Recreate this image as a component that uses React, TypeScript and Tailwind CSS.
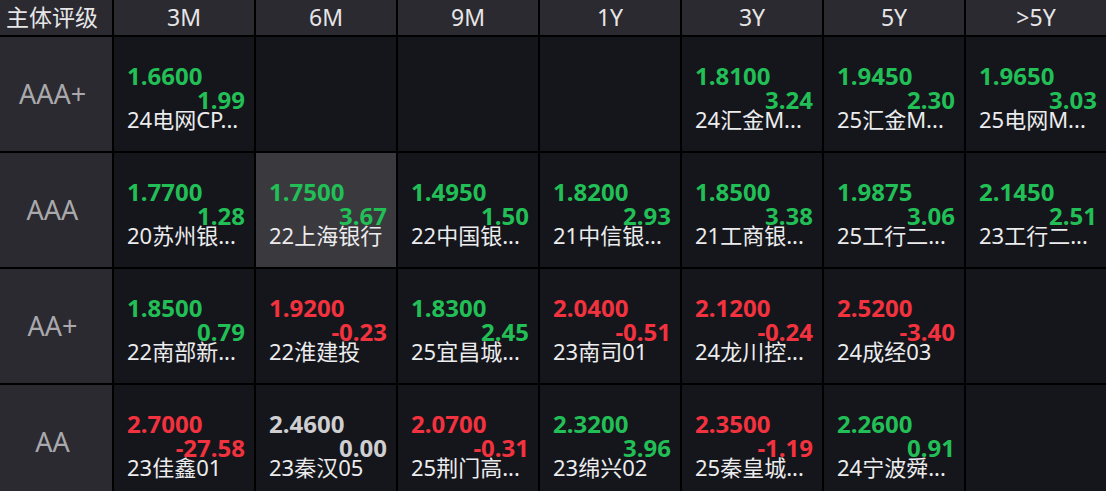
import React from 'react';

type Tone = 'up' | 'down' | 'flat';

interface Quote {
  price: string;
  change: string;
  name: string;
  tone: Tone;
  active?: boolean;
}

interface RatingRow {
  rating: string;
  cells: (Quote | null)[];
}

const TERMS = ['3M', '6M', '9M', '1Y', '3Y', '5Y', '>5Y'];

const ROWS: RatingRow[] = [
  {
    rating: 'AAA+',
    cells: [
      { price: '1.6600', change: '1.99', name: '24电网CP...', tone: 'up' },
      null,
      null,
      null,
      { price: '1.8100', change: '3.24', name: '24汇金M...', tone: 'up' },
      { price: '1.9450', change: '2.30', name: '25汇金M...', tone: 'up' },
      { price: '1.9650', change: '3.03', name: '25电网M...', tone: 'up' },
    ],
  },
  {
    rating: 'AAA',
    cells: [
      { price: '1.7700', change: '1.28', name: '20苏州银...', tone: 'up' },
      { price: '1.7500', change: '3.67', name: '22上海银行', tone: 'up', active: true },
      { price: '1.4950', change: '1.50', name: '22中国银...', tone: 'up' },
      { price: '1.8200', change: '2.93', name: '21中信银...', tone: 'up' },
      { price: '1.8500', change: '3.38', name: '21工商银...', tone: 'up' },
      { price: '1.9875', change: '3.06', name: '25工行二...', tone: 'up' },
      { price: '2.1450', change: '2.51', name: '23工行二...', tone: 'up' },
    ],
  },
  {
    rating: 'AA+',
    cells: [
      { price: '1.8500', change: '0.79', name: '22南部新...', tone: 'up' },
      { price: '1.9200', change: '-0.23', name: '22淮建投', tone: 'down' },
      { price: '1.8300', change: '2.45', name: '25宜昌城...', tone: 'up' },
      { price: '2.0400', change: '-0.51', name: '23南司01', tone: 'down' },
      { price: '2.1200', change: '-0.24', name: '24龙川控...', tone: 'down' },
      { price: '2.5200', change: '-3.40', name: '24成经03', tone: 'down' },
      null,
    ],
  },
  {
    rating: 'AA',
    cells: [
      { price: '2.7000', change: '-27.58', name: '23佳鑫01', tone: 'down' },
      { price: '2.4600', change: '0.00', name: '23秦汉05', tone: 'flat' },
      { price: '2.0700', change: '-0.31', name: '25荆门高...', tone: 'down' },
      { price: '2.3200', change: '3.96', name: '23绵兴02', tone: 'up' },
      { price: '2.3500', change: '-1.19', name: '25秦皇城...', tone: 'down' },
      { price: '2.2600', change: '0.91', name: '24宁波舜...', tone: 'up' },
      null,
    ],
  },
];

const toneClass: Record<Tone, string> = {
  up: 'text-[#22bf57]',
  down: 'text-[#f2323e]',
  flat: 'text-[#cfcfd2]',
};

const QuoteCell = ({ quote }: { quote: Quote | null }) => {
  if (!quote) return <div className="bg-[#15161b]" />;

  return (
    <div
      className={`flex flex-col justify-center pl-[13px] pr-[9px] pt-[4px] ${
        quote.active ? 'bg-[#3a393e]' : 'bg-[#15161b]'
      }`}
    >
      <div className={`text-[24px] font-bold leading-[24px] ${toneClass[quote.tone]}`}>{quote.price}</div>
      <div className={`text-right text-[24px] font-bold leading-[24px] ${toneClass[quote.tone]}`}>
        {quote.change}
      </div>
      <div className="-mt-[3px] whitespace-nowrap text-[22px] leading-[20px] text-[#ececee]">{quote.name}</div>
    </div>
  );
};

export default function App() {
  return (
    <div
      className="h-[491px] w-[1106px] overflow-hidden bg-black"
      style={{ fontFamily: '"Noto Sans", "Noto Sans CJK SC", sans-serif' }}
    >
      <div className="grid grid-cols-[112px_repeat(7,140px)] grid-rows-[35px_repeat(4,114px)] gap-[2px]">
        <div className="flex items-center justify-center bg-[#2b2a30] pr-[8px] text-[23px] text-[#e6e6e8]">
          主体评级
        </div>
        {TERMS.map((term) => (
          <div key={term} className="flex items-center justify-center bg-[#2b2a30] text-[23px] text-[#e6e6e8]">
            {term}
          </div>
        ))}

        {ROWS.map((row) => (
          <React.Fragment key={row.rating}>
            <div className="flex items-center justify-center bg-[#2b2a30] pr-[7px] text-[27px] text-[#a9a9ad]">
              {row.rating}
            </div>
            {row.cells.map((quote, i) => (
              <QuoteCell key={i} quote={quote} />
            ))}
          </React.Fragment>
        ))}
      </div>
    </div>
  );
}
